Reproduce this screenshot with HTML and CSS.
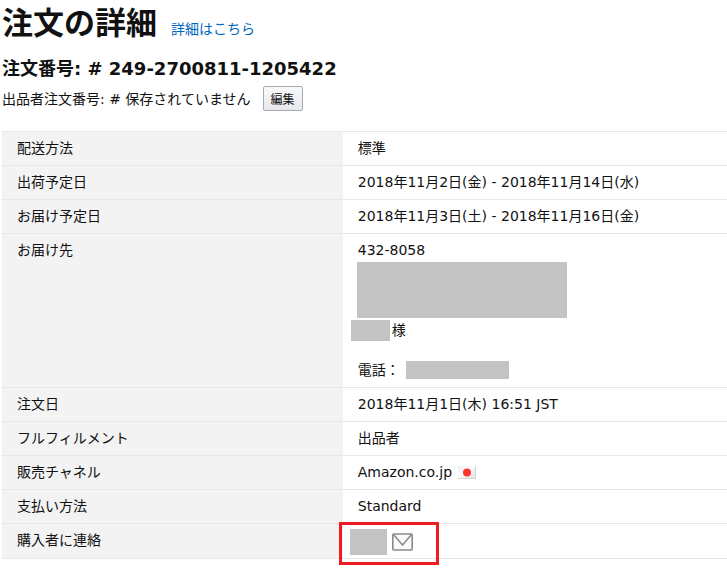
FILE: index.html
```html
<!DOCTYPE html>
<html lang="ja">

<head>
    <meta charset="UTF-8">
    <meta name="viewport" content="width=device-width, initial-scale=1.0">
    <title>注文の詳細</title>
    <link rel="stylesheet" href="styles.css">
</head>

<body>
    <div class="title">
        <h1>注文の詳細</h1>
        <a href="#">詳細はこちら</a>
    </div>
    <h2>注文番号: # 249-2700811-1205422</h2>
    <div class="seller-order">
        <span>出品者注文番号: # 保存されていません</span>
        <button type="button">編集</button>
    </div>
    <table class="details">
        <tbody>
            <tr>
                <th scope="row">配送方法</th>
                <td>標準</td>
            </tr>
            <tr>
                <th scope="row">出荷予定日</th>
                <td>2018年11月2日(金) - 2018年11月14日(水)</td>
            </tr>
            <tr>
                <th scope="row">お届け予定日</th>
                <td>2018年11月3日(土) - 2018年11月16日(金)</td>
            </tr>
            <tr>
                <th scope="row">お届け先</th>
                <td>
                    <div>432-8058</div>
                    <div class="mask address"></div>
                    <div class="line name"><span class="mask"></span>様</div>
                    <div class="line phone">電話： <span class="mask"></span></div>
                </td>
            </tr>
            <tr>
                <th scope="row">注文日</th>
                <td>2018年11月1日(木) 16:51 JST</td>
            </tr>
            <tr>
                <th scope="row">フルフィルメント</th>
                <td>出品者</td>
            </tr>
            <tr>
                <th scope="row">販売チャネル</th>
                <td>
                    <div class="line channel">
                        Amazon.co.jp
                        <svg width="18" height="13" viewBox="0 0 18 13">
                            <defs>
                                <linearGradient id="flag" x1="0" y1="0" x2="1" y2="1">
                                    <stop offset="0" stop-color="#f0f0f0" />
                                    <stop offset="0.4" stop-color="#fcfcfc" />
                                    <stop offset="1" stop-color="#dedede" />
                                </linearGradient>
                            </defs>
                            <rect width="18" height="13" fill="url(#flag)" />
                            <path d="M0 12.5h17.5V0" fill="none" stroke="#d6d6d6" />
                            <circle cx="9" cy="6.5" r="4" fill="#fb3432" />
                        </svg>
                    </div>
                </td>
            </tr>
            <tr>
                <th scope="row">支払い方法</th>
                <td>Standard</td>
            </tr>
            <tr>
                <th scope="row">購入者に連絡</th>
                <td class="contact">
                    <div class="line">
                        <span class="mask"></span>
                        <a href="#" aria-label="購入者に連絡">
                            <svg width="21" height="18" viewBox="0 0 21 18" fill="none" stroke="#888b8d">
                                <rect x="0.8" y="1" width="19.4" height="16" rx="1" fill="#fbfbfb" stroke-width="1.6" />
                                <path d="M1.5 1.5L10.5 12L19.5 1.5" stroke-width="1.5" />
                            </svg>
                        </a>
                    </div>
                </td>
            </tr>
        </tbody>
    </table>
</body>

</html>
```

FILE: styles.css
```css
body {
    margin: 0;
    padding: 2px 0 22px 2px;
    font-family: 'DejaVu Sans', 'Noto Sans CJK JP', sans-serif;
    font-size: 14px;
    line-height: 20px;
    color: #111;
    background-color: #fff;
}

a {
    color: #0066c0;
    text-decoration: none;
}

h1,
h2 {
    margin: 0;
    font-weight: bold;
}

.title {
    display: flex;
    align-items: baseline;
    gap: 14px;
}

h1 {
    font-size: 31px;
    line-height: 42px;
}

h2 {
    margin-top: 12px;
    font-size: 18px;
    line-height: 26px;
}

.seller-order {
    display: flex;
    align-items: center;
    gap: 12px;
    margin-top: 4px;
}

.seller-order button {
    height: 25px;
    padding: 0 7px;
    font-family: inherit;
    font-size: 12px;
    color: #111;
    border: 1px solid #a6a9b0;
    border-radius: 2px;
    background: linear-gradient(#f8f9fa, #e6e8ec);
}

.details {
    width: 100%;
    margin-top: 20px;
    border-collapse: separate;
    border-spacing: 0;
    border-bottom: 1px solid #e7e7e7;
}

.details th,
.details td {
    padding: 6px 15px 7px;
    border-top: 1px solid #e7e7e7;
    text-align: left;
    vertical-align: top;
    font-weight: normal;
}

.details th {
    width: 47%;
    box-sizing: border-box;
    background-color: #f3f3f3;
}

.line {
    display: flex;
    align-items: center;
    height: 20px;
}

.mask {
    background-color: #c3c3c3;
}

.address {
    width: 210px;
    height: 56px;
    margin: 2px 0 2px -1px;
}

.name .mask {
    width: 39px;
    height: 21px;
    margin: 0 2px 0 -7px;
}

.phone {
    gap: 6px;
    margin-top: 20px;
}

.phone .mask {
    width: 103px;
    height: 18px;
}

.channel {
    gap: 6px;
}

.details .contact {
    position: relative;
    padding: 6px 7px 7px;
}

.contact .line {
    gap: 5px;
    height: 26px;
    margin: -1px 0 -4px;
}

.contact .mask {
    width: 37px;
    height: 26px;
}

.contact svg {
    display: block;
}

/* red frame around the contact link */
.contact::after {
    content: '';
    position: absolute;
    top: -2px;
    left: -4px;
    width: 94px;
    height: 37px;
    border: 3px solid #ef1c24;
    pointer-events: none;
}
```
